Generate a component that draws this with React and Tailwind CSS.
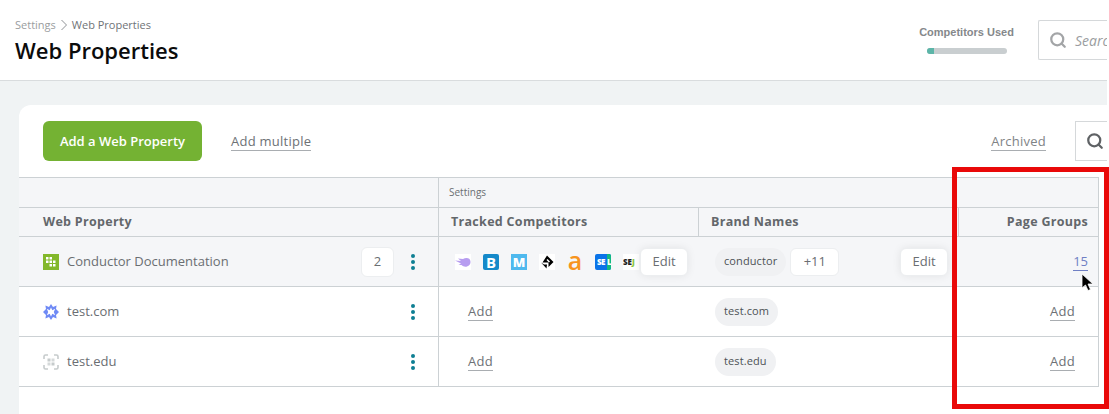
import React from "react";
import { Search } from "lucide-react";

const font = { fontFamily: '"Open Sans", sans-serif' };

const LinkText = ({ children, className = "" }) => (
  <span className={`border-b border-[#a9adb1] leading-[17px] text-[13px] font-medium tracking-[0.25px] text-[#6d7175] ${className}`}>
    {children}
  </span>
);

const Kebab = () => (
  <svg width="6" height="18" viewBox="0 0 6 18" className="shrink-0">
    <circle cx="3" cy="3" r="2" fill="#0e7f93" />
    <circle cx="3" cy="9" r="2" fill="#0e7f93" />
    <circle cx="3" cy="15" r="2" fill="#0e7f93" />
  </svg>
);

const ConductorIcon = () => (
  <span className="w-4 h-4 bg-[#83b82b] flex items-center justify-center shrink-0">
    <svg width="12" height="12" viewBox="0 0 12 12" fill="#fff">
      <rect x="1" y="1" width="2.500" height="2.500" />
      <rect x="4.500" y="1" width="2.500" height="2.500" />
      <rect x="1" y="4.500" width="2.500" height="2.500" />
      <rect x="4.500" y="4.500" width="2.500" height="2.500" />
      <rect x="8" y="4.500" width="2.500" height="2.500" />
      <rect x="4.500" y="8" width="2.500" height="2.500" />
      <rect x="8" y="8" width="2.500" height="2.500" />
    </svg>
  </span>
);

const StarIcon = () => (
  <svg width="16" height="16" viewBox="0 0 16 16" className="shrink-0">
    <path d="M8 0l2 3 3.600-1.600L13 5l3 3-3 3 .6 3.600L10 13l-2 3-2-3-3.600 1.600L3 11 0 8l3-3-.6-3.600L6 3z" fill="#6f8af5" />
    <path d="M8 3.500l1.300 2.700 2.900-1.400-1.400 3.200 1.400 3.200-2.900-1.400L8 12.500l-1.300-2.700-2.900 1.400 1.400-3.200-1.400-3.200 2.900 1.400z" fill="#fff" />
  </svg>
);

const FrameIcon = () => (
  <svg width="16" height="16" viewBox="0 0 16 16" fill="none" className="shrink-0">
    <path d="M1 5V2.500A1.500 1.500 0 0 1 2.500 1H5M11 1h2.500A1.500 1.500 0 0 1 15 2.500V5M15 11v2.500a1.500 1.500 0 0 1-1.500 1.500H11M5 15H2.500A1.500 1.500 0 0 1 1 13.500V11" stroke="#c6cbcc" strokeWidth="1.600" />
    <rect x="4.500" y="4.500" width="3" height="3" fill="#c6cbcc" />
    <rect x="8.500" y="4.500" width="3" height="3" fill="#d5d9da" />
    <rect x="4.500" y="8.500" width="3" height="3" fill="#d5d9da" />
    <rect x="8.500" y="8.500" width="3" height="3" fill="#c6cbcc" />
  </svg>
);

const CompetitorIcons = () => (
  <div className="flex items-center gap-3">
    <span className="w-4 h-4 bg-white flex items-center justify-center">
      <svg width="16" height="16" viewBox="0 0 16 16">
        <path d="M0 6.500L6 7 3 4.500l5 .5c2-1.500 5-1.500 6.500 0 2 2.500 1 6.500-2.500 7.500-2 .5-4 0-5.500-1.500L3.500 11 6 9.500z" fill="#b79df0" />
      </svg>
    </span>
    <span className="w-4 h-4 rounded-[2px] bg-[#1589c9] text-white text-[15px] leading-4 font-bold text-center">B</span>
    <span className="w-4 h-4 bg-[#4fb9ee] text-white text-[13px] leading-4 font-extrabold text-center">M</span>
    <span className="w-4 h-4 bg-white flex items-center justify-center">
      <svg width="16" height="16" viewBox="0 0 16 16" fill="none">
        <path d="M8 1.500L14.500 8 9.500 13V8.500H3.500L8 1.500z" fill="#000" />
        <path d="M8 5.500L10.500 8" stroke="#fff" strokeWidth="1.500" />
        <path d="M2 8.500L7.500 14.500 8 10.500H5z" fill="#000" />
      </svg>
    </span>
    <span className="w-4 h-4 text-[#f7941d] text-[25px] leading-[13px] font-semibold text-center">a</span>
    <span className="w-4 h-4 rounded-[2px] bg-[#0a73e8] overflow-hidden flex text-white text-[8px] leading-4 font-extrabold tracking-[-0.5px]">
      <span className="w-3 pl-[2px]">SE</span>
      <span className="w-1 bg-[#11b981]">L</span>
    </span>
    <span className="w-4 h-4 bg-white text-[#222] text-[8px] leading-4 font-extrabold whitespace-nowrap overflow-hidden">
      SE<span className="text-[#8cc63f]">J</span>
    </span>
  </div>
);

const Pill = ({ children }) => (
  <span className="h-7 px-[9px] rounded-full bg-[#f0f1f3] flex items-center text-[11px] font-medium tracking-[0.1px] text-[#4d5155]">
    {children}
  </span>
);

const WhiteBtn = ({ children, className = "" }) => (
  <span className={`h-7 rounded-md bg-white border border-[#eceef0] flex items-center justify-center text-[13px] text-[#6a6e72] ${className}`}>
    {children}
  </span>
);

const Row = ({ icon, name, badge, active, competitors, brand, groups }) => (
  <div className={`flex h-[50px] border-b border-[#ccd1d4] ${active ? "bg-[#f5f6f8]" : "bg-white"}`}>
    <div className="w-[420px] flex items-center pl-6 pr-[22px] border-r border-[#ccd1d4]">
      {icon}
      <span className="ml-2 text-[13px] text-[#6a6e72] flex-1">{name}</span>
      {badge && (
        <WhiteBtn className="w-[33px] h-[30px] mr-4 border-[#e3e5e8]">{badge}</WhiteBtn>
      )}
      <Kebab />
    </div>
    <div className="relative w-[260px] flex items-center">{competitors}</div>
    <div className="relative w-[260px] flex items-center pl-4 gap-1">{brand}</div>
    <div className="w-[140px] flex items-center justify-end border-r border-[#ccd1d4]">{groups}</div>
  </div>
);

export default function App() {
  return (
    <div style={font} className="relative w-[1109px] h-[414px] overflow-hidden bg-white">
      <div className="w-[1107px] h-[414px] overflow-hidden bg-[#f0f3f4]">
        <header className="h-[81px] bg-white border-b border-[#d9dcde] flex justify-between pl-[15px]">
          <div className="pt-[17px]">
            <div className="flex items-center text-[11px] leading-4 text-[#9a9da0]">
              Settings
              <svg width="9" height="12" viewBox="0 0 9 12" fill="none" className="ml-[4px] mr-[3px]">
                <path d="M1.500 1l5 5-5 5" stroke="#8f9296" strokeWidth="1" />
              </svg>
              <span className="text-[#6f7377]">Web Properties</span>
            </div>
            <h1 className="text-[22px] leading-[29px] mt-[3px] font-semibold text-[#0b0b0b]">Web Properties</h1>
          </div>
          <div className="flex items-start pt-5">
            <div className="w-[95px] mr-6 flex flex-col items-center pt-[5px]">
              <span style={{ fontFamily: '"Liberation Sans", sans-serif' }} className="text-[11px] leading-[14px] font-bold text-[#85888b] whitespace-nowrap">
                Competitors Used
              </span>
              <div className="w-20 h-[6px] mt-[9px] rounded-sm bg-[#c9ced0] overflow-hidden">
                <div className="w-[7px] h-full bg-[#5cb5a8]" />
              </div>
            </div>
            <div className="w-[69px] h-10 border border-r-0 border-[#d5d8da] rounded-l-[2px] bg-white flex items-center pl-[10px] overflow-hidden">
              <Search size={18} strokeWidth={3} className="text-[#a3a5a7] shrink-0" />
              <span className="ml-2 text-[14px] italic text-[#9a9da0]">Search</span>
            </div>
          </div>
        </header>

        <main className="pt-6 pl-[19px]">
          <div className="h-[320px] bg-white rounded-tl-xl">
            <div className="h-[72px] flex items-center pl-6">
              <button className="w-[159px] h-10 pt-px rounded-md bg-[#74b233] text-white text-[13px] font-semibold">
                Add a Web Property
              </button>
              <LinkText className="ml-[29px] mt-[2px]">Add multiple</LinkText>
              <LinkText className="ml-auto mr-[29px] mt-[2px] text-[#808386]">Archived</LinkText>
              <div className="w-8 h-10 border border-r-0 border-[#d5d8da] flex items-center pl-[10px] overflow-hidden">
                <Search size={18} strokeWidth={3} className="text-[#5f6265] shrink-0" />
              </div>
            </div>

            <div className="w-[1080px] border-t border-[#ccd1d4]">
              <div className="flex h-[30px] bg-[#f5f6f8] border-b border-[#ccd1d4]">
                <div className="w-[420px] border-r border-[#ccd1d4]" />
                <div className="w-[520px] flex items-center pl-[10px] text-[10px] text-[#6a6e72]">Settings</div>
                <div className="w-[140px] border-r border-[#ccd1d4]" />
              </div>
              <div className="flex h-[29px] bg-[#f5f6f8] border-b border-[#ccd1d4] text-[12.500px] font-bold text-[#63676b] tracking-[0.3px]">
                <div className="w-[420px] flex items-center pl-6 border-r border-[#ccd1d4]">Web Property</div>
                <div className="w-[260px] flex items-center pl-3 border-r border-[#ccd1d4]">Tracked Competitors</div>
                <div className="w-[260px] flex items-center pl-3 border-r border-[#ccd1d4]">Brand Names</div>
                <div className="w-[140px] flex items-center justify-end pr-[10px] border-r border-[#ccd1d4]">Page Groups</div>
              </div>
              <Row
                active
                icon={<ConductorIcon />}
                name="Conductor Documentation"
                badge="2"
                competitors={
                  <>
                    <div className="pl-4"><CompetitorIcons /></div>
                    <WhiteBtn className="absolute left-[201px] top-[11px] w-12 shadow-[0_0_8px_rgba(0,0,0,0.08)]">Edit</WhiteBtn>
                  </>
                }
                brand={
                  <>
                    <Pill>conductor</Pill>
                    <WhiteBtn className="w-[49px]">+11</WhiteBtn>
                    <WhiteBtn className="absolute left-[201px] top-[11px] w-12 shadow-[0_0_8px_rgba(0,0,0,0.08)]">Edit</WhiteBtn>
                  </>
                }
                groups={<span className="mr-[10px] text-[13px] text-[#6f7fc4] border-b border-[#6f7fc4] leading-[17px]">15</span>}
              />
              <Row
                icon={<StarIcon />}
                name="test.com"
                competitors={<LinkText className="ml-[29px]">Add</LinkText>}
                brand={<Pill>test.com</Pill>}
                groups={<LinkText className="mr-[23px]">Add</LinkText>}
              />
              <Row
                icon={<FrameIcon />}
                name="test.edu"
                competitors={<LinkText className="ml-[29px]">Add</LinkText>}
                brand={<Pill>test.edu</Pill>}
                groups={<LinkText className="mr-[23px]">Add</LinkText>}
              />
            </div>
          </div>
        </main>
      </div>

      {/* annotation drawn on top of the screenshot */}
      <div className="absolute left-[952px] top-[167px] w-[157px] h-[242px] border-[5px] border-[#e90909] pointer-events-none" />
      <svg width="14" height="20" viewBox="0 0 14 20" className="absolute left-[1081px] top-[273px]">
        <path d="M1 1v14l3.500-3 2.500 5.500 2.500-1L7 11h5z" fill="#000" stroke="#fff" strokeWidth="0.800" />
      </svg>
    </div>
  );
}
